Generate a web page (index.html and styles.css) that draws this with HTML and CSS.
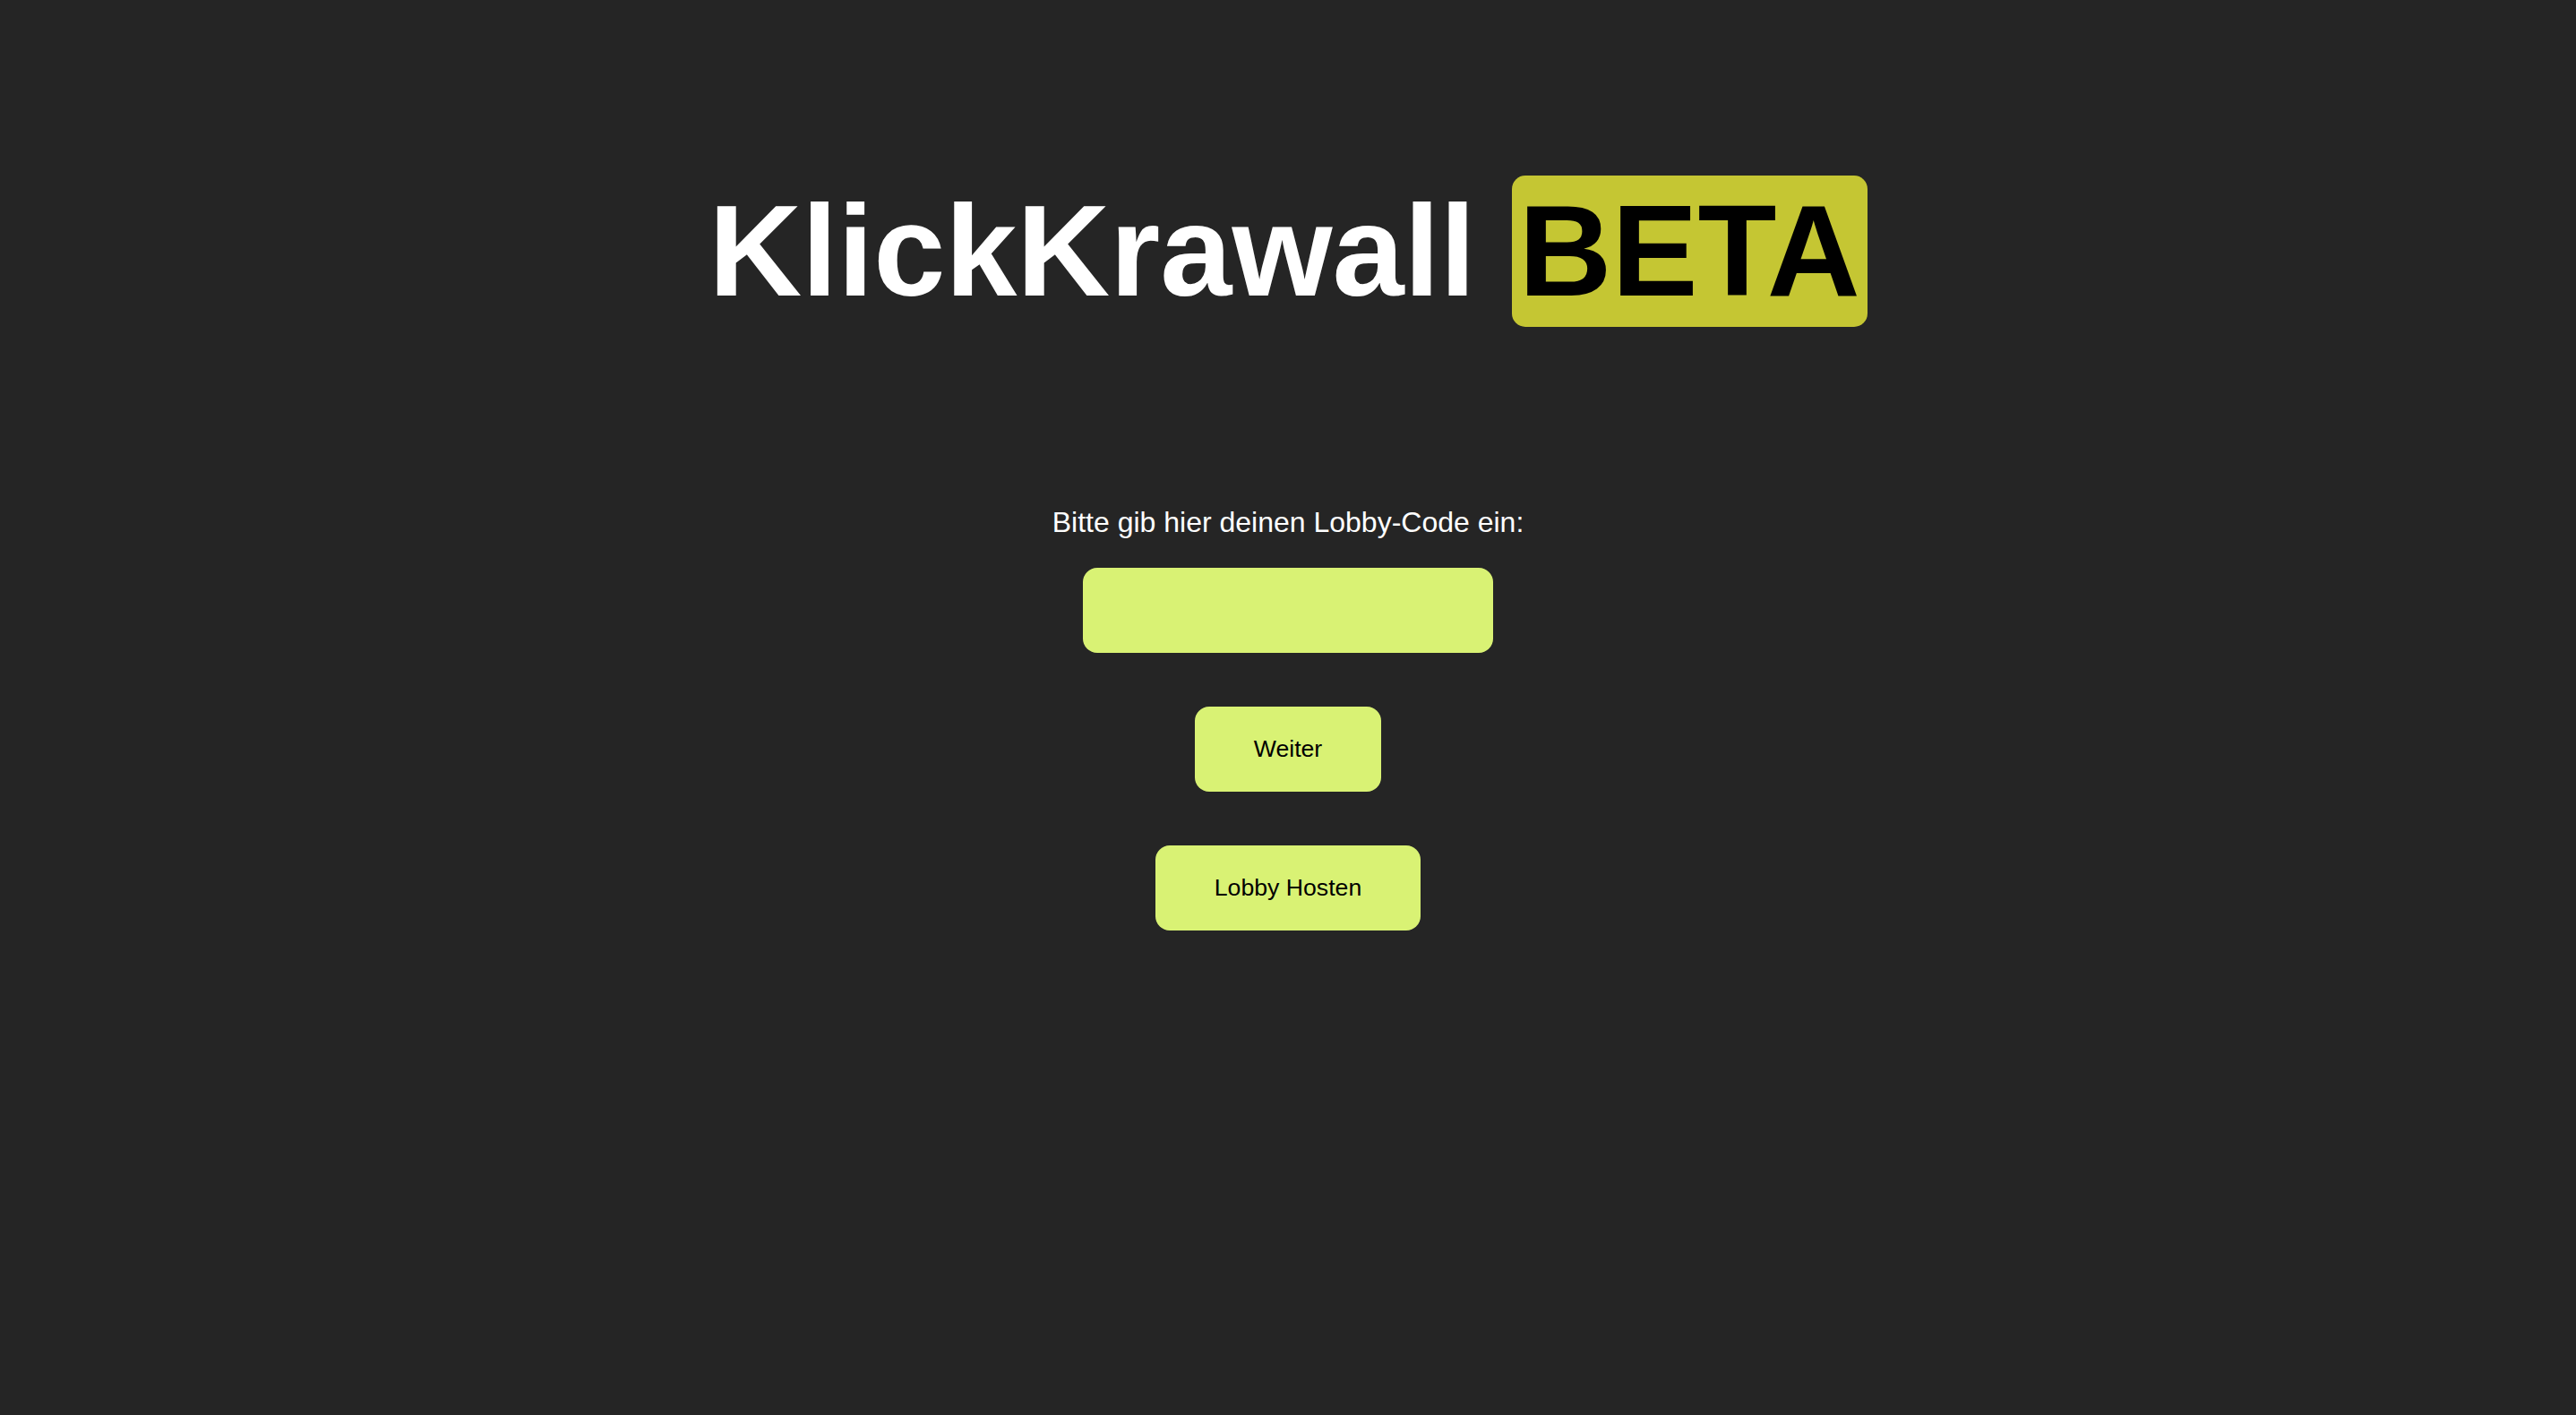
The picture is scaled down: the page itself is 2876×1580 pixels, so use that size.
FILE: index.html
```html
<!DOCTYPE html>
<html lang="de">
<head>
<meta charset="utf-8">
<title>KlickKrawall</title>
<link rel="stylesheet" href="styles.css">
</head>
<body>
<main class="page">
  <h1 class="title">KlickKrawall <span class="beta">BETA</span></h1>
  <label class="label" for="code">Bitte gib hier deinen Lobby-Code ein:</label>
  <input class="code-input" id="code" type="text">
  <button class="btn">Weiter</button>
  <button class="btn">Lobby Hosten</button>
</main>
</body>
</html>
```
FILE: styles.css
```css
html, body {
  margin: 0;
  padding: 0;
  background: #252525;
  height: 100%;
}
body {
  font-family: "Liberation Sans", Arial, sans-serif;
  color: #ffffff;
}
.page {
  display: flex;
  flex-direction: column;
  align-items: center;
}
.title {
  margin: 197px 0 0 0;
  font-size: 144px;
  line-height: 168px;
  font-weight: bold;
  color: #ffffff;
  white-space: nowrap;
}
.beta {
  background: #c5c633;
  color: #000000;
  padding: 4px 8px;
  border-radius: 15px;
}
.label {
  margin-top: 200px;
  font-size: 32px;
  line-height: 36px;
  color: #ffffff;
}
.code-input {
  margin-top: 33px;
  width: 458px;
  height: 95px;
  box-sizing: border-box;
  border: none;
  border-radius: 16px;
  background: #d9f274;
  font-family: "Liberation Sans", Arial, sans-serif;
  font-size: 26.67px;
  padding: 0 20px;
  outline: none;
}
.btn {
  margin-top: 60px;
  height: 95px;
  padding: 0 66px;
  border: none;
  border-radius: 16px;
  background: #d9f274;
  color: #000000;
  font-family: "Liberation Sans", Arial, sans-serif;
  font-size: 26.67px;
}
```
